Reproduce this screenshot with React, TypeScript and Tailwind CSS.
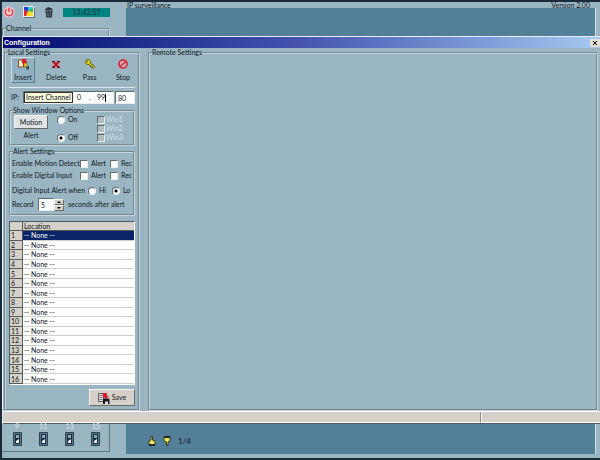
import React, { useState } from "react";

const channels = Array.from({ length: 16 }, (_, i) => i + 1);

const group = "min-w-0 border-2 border-[#c3d7df] [border-style:groove]";
const sunken =
  "border border-t-[#5d6a70] border-l-[#5d6a70] border-r-[#e6eef1] border-b-[#e6eef1]";
const raised =
  "border border-t-[#f4f4f0] border-l-[#f4f4f0] border-r-[#6a6a66] border-b-[#6a6a66]";

function PowerIcon() {
  return (
    <svg viewBox="0 0 12 12" className="size-3">
      <circle cx="6" cy="6" r="5.5" fill="#f0c8ce" />
      <path d="M3.6 3.3a3.7 3.7 0 1 0 4.800 0M6 1.500v4.500" fill="none" stroke="#e8303c" strokeWidth="1.300" />
    </svg>
  );
}

function PaletteIcon() {
  return (
    <svg viewBox="0 0 12 12" className="size-3">
      <path d="M1 2h11v10H1z" fill="#66747a" />
      <path d="M0 0h11v11H0z" fill="#f0ece4" />
      <path d="M1 1h5v5H1z" fill="#2440dc" />
      <path d="M5 1h5v4H5z" fill="#38c8e0" />
      <path d="M1 4l4 1-1 5H1z" fill="#e8263a" />
      <path d="M3 10l2-5 5 1v4z" fill="#f4dc28" />
      <path d="M5 5l5-3v4z" fill="#38b848" />
    </svg>
  );
}

function TrashIcon() {
  return (
    <svg viewBox="0 0 10 12" className="h-3 w-2.5">
      <path d="M1 3.500l3-2.500 4 1.500 1 2H1zM1.500 5h7l-.6 6.500H2.200z" fill="#2c353c" />
      <path d="M3.700 5.500l.3 5M6.300 5.500l-.3 5" stroke="#84949a" strokeWidth=".7" />
    </svg>
  );
}

function InsertIcon() {
  return (
    <svg viewBox="0 0 12 12" className="size-3">
      <path d="M1.500 2h5v7h-5z" fill="#fbeecb" stroke="#8a4a28" />
      <path d="M5 1h4l1 4-3 2-2-2z" fill="#e01c24" />
      <path d="M7 5h3v4H7z" fill="#f2d21c" stroke="#58500c" strokeWidth=".6" />
      <path d="M9 8l2.500 3M9.500 11h2V8.500" stroke="#222" fill="none" />
    </svg>
  );
}

function DeleteIcon() {
  return (
    <svg viewBox="0 0 12 12" className="size-3">
      <path d="M3 3.500l6 6M9 3.500l-6 6" stroke="#c41420" strokeWidth="2" />
      <path d="M2 3.500h3M7 3.500h3M2 9.500h3M7 9.500h3" stroke="#6c1018" />
    </svg>
  );
}

function KeyIcon() {
  return (
    <svg viewBox="0 0 12 12" className="size-3">
      <path d="M5 5l5.500 5M8 8l-1 1.500" stroke="#4c4808" strokeWidth="2.600" />
      <circle cx="4" cy="4" r="2.600" fill="#e8dc20" stroke="#5c560c" strokeWidth=".8" />
      <path d="M5.500 5.500l5 4.600" stroke="#e8dc20" strokeWidth="1.200" />
      <circle cx="3.500" cy="3.500" r=".9" fill="#5c560c" />
    </svg>
  );
}

function StopIcon() {
  return (
    <svg viewBox="0 0 12 12" className="size-3">
      <circle cx="6" cy="6" r="4" fill="#c8b4bc" stroke="#dc2430" strokeWidth="1.600" />
      <path d="M3.200 8.800l5.600-5.600" stroke="#dc2430" strokeWidth="1.500" />
    </svg>
  );
}

function SaveIcon() {
  return (
    <svg viewBox="0 0 12 12" className="size-3">
      <path d="M.5 1.500h5v8h-5z" fill="#d8dcd8" stroke="#444" strokeWidth=".8" />
      <path d="M1.500 3.500h3M1.500 5.500h3M1.500 7.500h3" stroke="#555" strokeWidth=".7" />
      <path d="M5 1h4v3h2L8 7 4.500 4z" fill="#e0142c" />
      <path d="M5 6.500h6.500V12H5z" fill="#16161c" />
      <path d="M7 9.500h3V12H7z" fill="#dfe3e6" />
    </svg>
  );
}

function SwitchIcon() {
  return (
    <svg viewBox="0 0 9 14" className="h-3.5 w-[9px]">
      <path d="M.5 .5h8v13h-8z" fill="#547890" stroke="#2a4454" />
      <path d="M2 2h5v10H2z" fill="#1c2c3a" />
      <path d="M3 3h3v3H3z" fill="#90a8b8" />
      <path d="M3 9l3-2v4H3z" fill="#f2f6f8" />
    </svg>
  );
}

function HandIcon({ down = false }: { down?: boolean }) {
  return (
    <svg viewBox="0 0 8 10" className={down ? "h-2.5 w-2 rotate-180" : "h-2.5 w-2"}>
      <path d="M3 .5h1.500V4L7 5v4H1V5l2-1z" fill="#ece45c" stroke="#2c3010" strokeWidth=".9" />
      <path d="M1 8h6v2H1z" fill="#1c2420" />
    </svg>
  );
}

function Check({ label, off = false }: { label: string; off?: boolean }) {
  return (
    <label className={off ? "flex items-center gap-px text-[#d3e1e6]" : "flex items-center gap-[3px]"}>
      <input
        type="checkbox"
        disabled={off}
        className={`size-2 appearance-none ${sunken} ${off ? "bg-[#b4bcbb]" : "bg-white checked:bg-[#333]"}`}
      />
      {label}
    </label>
  );
}

function Radio({ name, label, on = false }: { name: string; label: string; on?: boolean }) {
  return (
    <label className="flex items-center gap-[3px]">
      <input
        type="radio"
        name={name}
        defaultChecked={on}
        className={`size-2 appearance-none rounded-full bg-white checked:bg-[radial-gradient(circle,#000_0_1px,#fff_2px)] ${sunken}`}
      />
      {label}
    </label>
  );
}

type ToolProps = { label: string; active?: boolean; children: React.ReactNode };

function ToolButton({ label, active = false, children }: ToolProps) {
  return (
    <button
      className={`flex h-[26px] w-6 flex-col items-center justify-between border ${
        active
          ? "border-t-[#d5e3e8] border-l-[#d5e3e8] border-r-[#5f7f8e] border-b-[#5f7f8e] bg-[#91b1c2]"
          : "border-transparent"
      }`}
    >
      {children}
      <span>{label}</span>
    </button>
  );
}

function LocalSettings() {
  const [selected, setSelected] = useState(1);

  return (
    <fieldset className={`flex w-[136px] shrink-0 flex-col px-[3px] ${group}`}>
      <legend className="-ml-px">Local Settings</legend>
      <div className="flex justify-between pl-0.5">
        <ToolButton label="Insert" active><InsertIcon /></ToolButton>
        <ToolButton label="Delete"><DeleteIcon /></ToolButton>
        <ToolButton label="Pass"><KeyIcon /></ToolButton>
        <ToolButton label="Stop"><StopIcon /></ToolButton>
      </div>
      <hr className="mt-1 border-[#dbe8ec]" />

      <div className="mt-[3px] flex items-center gap-px">
        <label htmlFor="ip" className="w-[13px] pl-0.5">IP:</label>
        <div className={`relative flex h-[13px] flex-1 items-center bg-white pl-[53px] ${sunken}`}>
          <input aria-label="IP part 3" defaultValue="0" className="w-3" />
          <span className="w-2">.</span>
          <input id="ip" defaultValue="99" className="w-2" />
          <span className="h-2 w-px bg-black" />
          <div
            role="tooltip"
            className="absolute top-0 left-0 border border-[#30342c] bg-[#fbf9dc] px-px whitespace-nowrap"
          >
            Insert Channel
          </div>
        </div>
        <input aria-label="Port" defaultValue="80" className={`h-[13px] w-5 bg-white pl-0.5 ${sunken}`} />
      </div>

      <fieldset className={`mt-0.5 flex px-[3px] pb-0.5 ${group}`}>
        <legend className="-ml-px">Show Window Options</legend>
        <div className="flex w-[43px] flex-col gap-0.5">
          <button className={`h-3.5 w-[34px] bg-[#dfe3e4] ${raised}`}>Motion</button>
          <span className="w-[34px] text-center">Alert</span>
        </div>
        <div className="flex w-10 flex-col justify-between">
          <Radio name="alert" label="On" />
          <Radio name="alert" label="Off" on />
        </div>
        <div className="flex flex-col">
          <Check label="Win1" off />
          <Check label="Win2" off />
          <Check label="Win3" off />
        </div>
      </fieldset>

      <fieldset className={`mt-px px-px pb-[3px] ${group}`}>
        <legend className="ml-px">Alert Settings</legend>
        <div className="grid grid-cols-[68px_30px_1fr] gap-y-[3px] pt-[3px]">
          <span className="whitespace-nowrap">Enable Motion Detect</span>
          <Check label="Alert" />
          <Check label="Rec" />
          <span className="whitespace-nowrap">Enable Digital Input</span>
          <Check label="Alert" />
          <Check label="Rec" />
        </div>
        <div className="mt-1.5 grid grid-cols-[76px_24px_1fr]">
          <span className="whitespace-nowrap">Digital Input Alert when</span>
          <Radio name="level" label="Hi" />
          <Radio name="level" label="Lo" on />
        </div>
        <div className="mt-[3px] flex items-center">
          <label htmlFor="record" className="w-[26px]">Record</label>
          <input id="record" defaultValue="5" className={`h-[13px] w-4 bg-white pl-0.5 ${sunken}`} />
          <div className="flex flex-col">
            <button aria-label="More" className={`flex h-1.5 w-2.5 items-center justify-center bg-[#d5d0c8] ${raised}`}>
              <svg viewBox="0 0 4 2" className="h-0.5 w-1"><path d="M2 0l2 2H0z" /></svg>
            </button>
            <button aria-label="Less" className={`flex h-1.5 w-2.5 items-center justify-center bg-[#d5d0c8] ${raised}`}>
              <svg viewBox="0 0 4 2" className="h-0.5 w-1"><path d="M0 0h4L2 2z" /></svg>
            </button>
          </div>
          <span className="pl-1">seconds after alert</span>
        </div>
      </fieldset>

      <table className="mt-[5px] h-[164px] w-full border-separate border-spacing-0 border border-t-[#4a5a62] border-l-[#4a5a62] border-r-white border-b-white bg-white leading-[8px]">
        <thead>
          <tr className="bg-[#d5d0c8] text-left">
            <th className="w-[13px] border-r border-b border-[#55585a] p-0" />
            <th className="border-b border-[#55585a] p-0 pl-px font-normal">Location</th>
          </tr>
        </thead>
        <tbody>
          {channels.map((n) => (
            <tr key={n} onClick={() => setSelected(n)}>
              <th className="border-r border-b border-[#55585a] bg-[#d5d0c8] p-0 pl-px text-left font-normal">{n}</th>
              <td
                className={`border-b border-[#d0d0cc] p-0 pl-px ${
                  n === selected ? "bg-[#0a246a] text-white" : "bg-white"
                }`}
              >
                -- None --
              </td>
            </tr>
          ))}
        </tbody>
      </table>

      <button className={`mt-1 flex h-[17px] w-[46px] items-center justify-center gap-0.5 self-end bg-[#d5d0c8] ${raised}`}>
        <SaveIcon />
        Save
      </button>
    </fieldset>
  );
}

export default function App() {
  return (
    <div className="flex h-screen flex-col overflow-hidden border-y-2 border-l-2 border-[#1a2a36] bg-[#9bb6c3] font-[Lato,'Liberation_Sans',sans-serif] text-[7px] leading-[9px] text-[#10181c]">
      <header className="flex h-[34px] shrink-0">
        <div className="flex w-[108px] shrink-0 flex-col">
          <div className="flex items-center gap-2 pt-1 pl-px">
            <button aria-label="Power"><PowerIcon /></button>
            <button aria-label="Colours"><PaletteIcon /></button>
            <button aria-label="Clear" className="mr-px ml-px"><TrashIcon /></button>
            <time className="h-[9px] flex-1 bg-[#008583] text-center text-[#043034]">13:42:57</time>
          </div>
          <fieldset className={`mt-1.5 flex-1 border-b-0 ${group}`}>
            <legend className="ml-0.5">Channel</legend>
          </fieldset>
        </div>
        <div className="ml-4 flex flex-1 flex-col pr-1">
          <div className="flex h-1.5 items-center justify-between pr-1.5 pl-px">
            <span>IP surveillance</span>
            <span>Version 2.00</span>
          </div>
          <div className="flex-1 border-r border-[#d6e4e9] bg-[#547f98]" />
        </div>
      </header>

      <main className="flex min-h-0 flex-1 flex-col border-t border-l border-[#e9eff1]">
        <div className="flex h-[11px] shrink-0 items-center justify-between bg-linear-to-r from-[#06066e] via-[#4654b0] to-[#a6caf0] pl-px">
          <h1 className="font-['Liberation_Sans',sans-serif] font-bold text-white">Configuration</h1>
          <button aria-label="Close" className="flex h-2 w-2.5 items-center justify-center bg-[#e4e0d8]">
            <svg viewBox="0 0 6 6" className="size-1.5"><path d="M1 1l4 4M5 1L1 5" stroke="#000" /></svg>
          </button>
        </div>
        <div className="flex min-h-0 flex-1 gap-2 pr-0.5 pl-px">
          <LocalSettings />
          <fieldset className={`flex-1 ${group}`}>
            <legend className="ml-0.5">Remote Settings</legend>
          </fieldset>
        </div>
        <div className="flex h-[13px] shrink-0 border-t border-b border-t-white border-b-[#4d5a60] bg-[#d5d0c8]">
          <div className="w-4/5 border-r border-b border-r-[#8c8a84] border-b-white" />
          <div className="flex-1 border-b border-l border-white" />
        </div>
      </main>

      <footer className="flex h-[34px] shrink-0">
        <div className="flex h-7 w-[108px] shrink-0 justify-between border-r border-b border-[#5d7885] pr-2 pl-2.5 text-[#dce7eb]">
          {[9, 11, 13, 15].map((n) => (
            <button key={n} aria-label={`Channel ${n}`} className="flex w-2.5 flex-col items-center">
              <span className="h-2 leading-[5px]">{n}</span>
              <SwitchIcon />
            </button>
          ))}
        </div>
        <div className="mr-1 mb-1 ml-4 flex flex-1 items-center gap-[7px] border-r border-[#d6e4e9] bg-[#547f98] pt-1 pl-[22px]">
          <button aria-label="Previous page"><HandIcon /></button>
          <button aria-label="Next page"><HandIcon down /></button>
          <span className="text-[8px]">1/4</span>
        </div>
      </footer>
    </div>
  );
}
